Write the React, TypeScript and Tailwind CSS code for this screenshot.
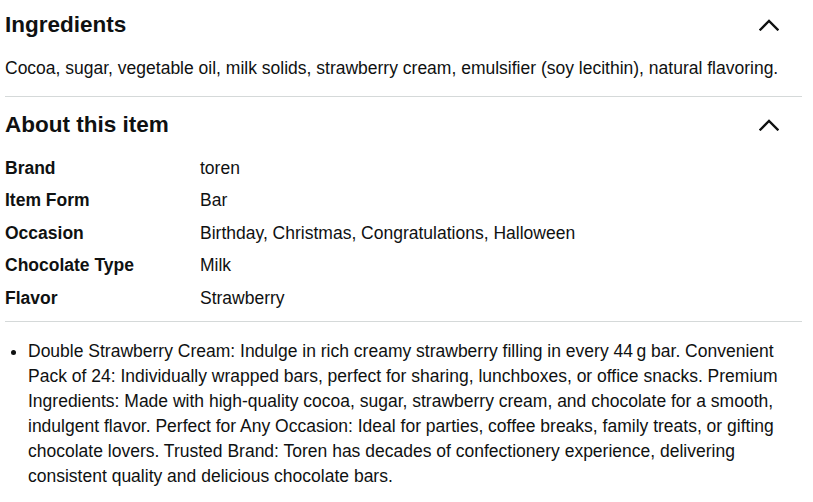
import React from "react";

function Chevron() {
  return (
    <svg width="20" height="12" viewBox="0 0 20 12" className="block">
      <polyline points="1.5,10.5 10,2 18.5,10.5" fill="none" stroke="#0F1111" strokeWidth="2.3" strokeLinecap="square" />
    </svg>
  );
}

const rows: [string, string][] = [
  ["Brand", "toren"],
  ["Item Form", "Bar"],
  ["Occasion", "Birthday, Christmas, Congratulations, Halloween"],
  ["Chocolate Type", "Milk"],
  ["Flavor", "Strawberry"],
];

export default function App() {
  return (
    <div
      className="w-[813px] h-[502px] bg-white text-[#0F1111] overflow-hidden"
      style={{ fontFamily: '"Liberation Sans", Arial, sans-serif' }}
    >
      <div className="pl-[5px] pr-[11px]">
        <div className="pt-[11px] flex items-center justify-between">
          <h2 className="text-[22.5px] leading-[28px] font-bold">Ingredients</h2>
          <div className="mr-[23px]"><Chevron /></div>
        </div>
        <p className="mt-[17px] text-[17.5px] leading-[25px]">
          Cocoa, sugar, vegetable oil, milk solids, strawberry cream, emulsifier (soy lecithin), natural flavoring.
        </p>
        <div className="mt-[15px] h-px bg-[#D5D9D9]" />
        <div className="mt-[14px] flex items-center justify-between">
          <h2 className="text-[22.5px] leading-[28px] font-bold">About this item</h2>
          <div className="mr-[23px]"><Chevron /></div>
        </div>
        <div className="mt-[12.75px]">
          {rows.map(([k, v]) => (
            <div key={k} className="flex h-[32.5px] items-center text-[17.5px] leading-[25px]">
              <div className="w-[195px] font-bold">{k}</div>
              <div>{v}</div>
            </div>
          ))}
        </div>
        <div className="mt-[7px] h-px bg-[#D5D9D9]" />
        <ul className="mt-[17px] list-disc pl-[23px] text-[17.5px] leading-[25px]">
          <li>
            Double Strawberry Cream: Indulge in rich creamy strawberry filling in every 44&#8239;g bar. Convenient Pack of 24: Individually wrapped bars, perfect for sharing, lunchboxes, or office snacks. Premium Ingredients: Made with high-quality cocoa, sugar, strawberry cream, and chocolate for a smooth, indulgent flavor. Perfect for Any Occasion: Ideal for parties, coffee breaks, family treats, or gifting chocolate lovers. Trusted Brand: Toren has decades of confectionery experience, delivering consistent quality and delicious chocolate bars.
          </li>
        </ul>
      </div>
    </div>
  );
}
